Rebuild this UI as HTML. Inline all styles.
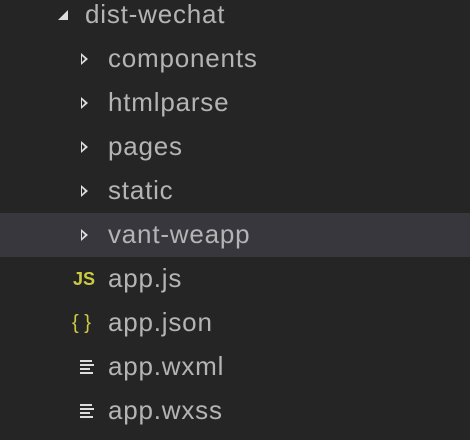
<!DOCTYPE html><html><head><style>
body{margin:0;width:470px;height:440px;background:#252526;overflow:hidden;font-family:"Liberation Sans",sans-serif;}
.r{position:absolute;left:0;width:470px;height:44px;line-height:44px;font-size:26px;letter-spacing:0.8px;color:#b4b4b4;}
.r span.t{position:absolute;left:108px;top:-1px}
.tri{position:absolute;left:81px;top:16px;width:0;height:0;border-left:7px solid #ddd;border-top:6px solid transparent;border-bottom:6px solid transparent;}
.tri:after{content:"";position:absolute;left:-6px;top:-3px;border-left:3px solid #252526;border-top:3px solid transparent;border-bottom:3px solid transparent;}
.hl .tri:after{border-left-color:#37373d}
.ic{position:absolute;left:73px;font-weight:bold;color:#cbcb41;font-size:18px;letter-spacing:0}
.ln{position:absolute;left:80px;height:2px;background:#ddd}
</style></head><body>
<div class="r" style="top:-7px"><div style="position:absolute;left:58px;top:17px;width:0;height:0;border-right:10px solid #ddd;border-top:10px solid transparent"></div><span class="t" style="left:85px">dist-wechat</span></div>
<div class="r" style="top:37px"><div class="tri"></div><span class="t">components</span></div>
<div class="r" style="top:81px"><div class="tri"></div><span class="t">htmlparse</span></div>
<div class="r" style="top:125px"><div class="tri"></div><span class="t">pages</span></div>
<div class="r" style="top:169px"><div class="tri"></div><span class="t">static</span></div>
<div class="r hl" style="top:213px;background:#37373d"><div class="tri"></div><span class="t">vant-weapp</span></div>
<div class="r" style="top:257px"><span class="ic">JS</span><span class="t">app.js</span></div>
<div class="r" style="top:301px"><span class="ic" style="left:72px;font-weight:normal;font-size:20px">{ }</span><span class="t">app.json</span></div>
<div class="r" style="top:345px"><div class="ln" style="top:15px;width:12px"></div><div class="ln" style="top:19px;width:14px"></div><div class="ln" style="top:23px;width:10px"></div><div class="ln" style="top:27px;width:13px"></div><span class="t">app.wxml</span></div>
<div class="r" style="top:389px"><div class="ln" style="top:15px;width:12px"></div><div class="ln" style="top:19px;width:14px"></div><div class="ln" style="top:23px;width:10px"></div><div class="ln" style="top:27px;width:13px"></div><span class="t">app.wxss</span></div>
</body></html>
